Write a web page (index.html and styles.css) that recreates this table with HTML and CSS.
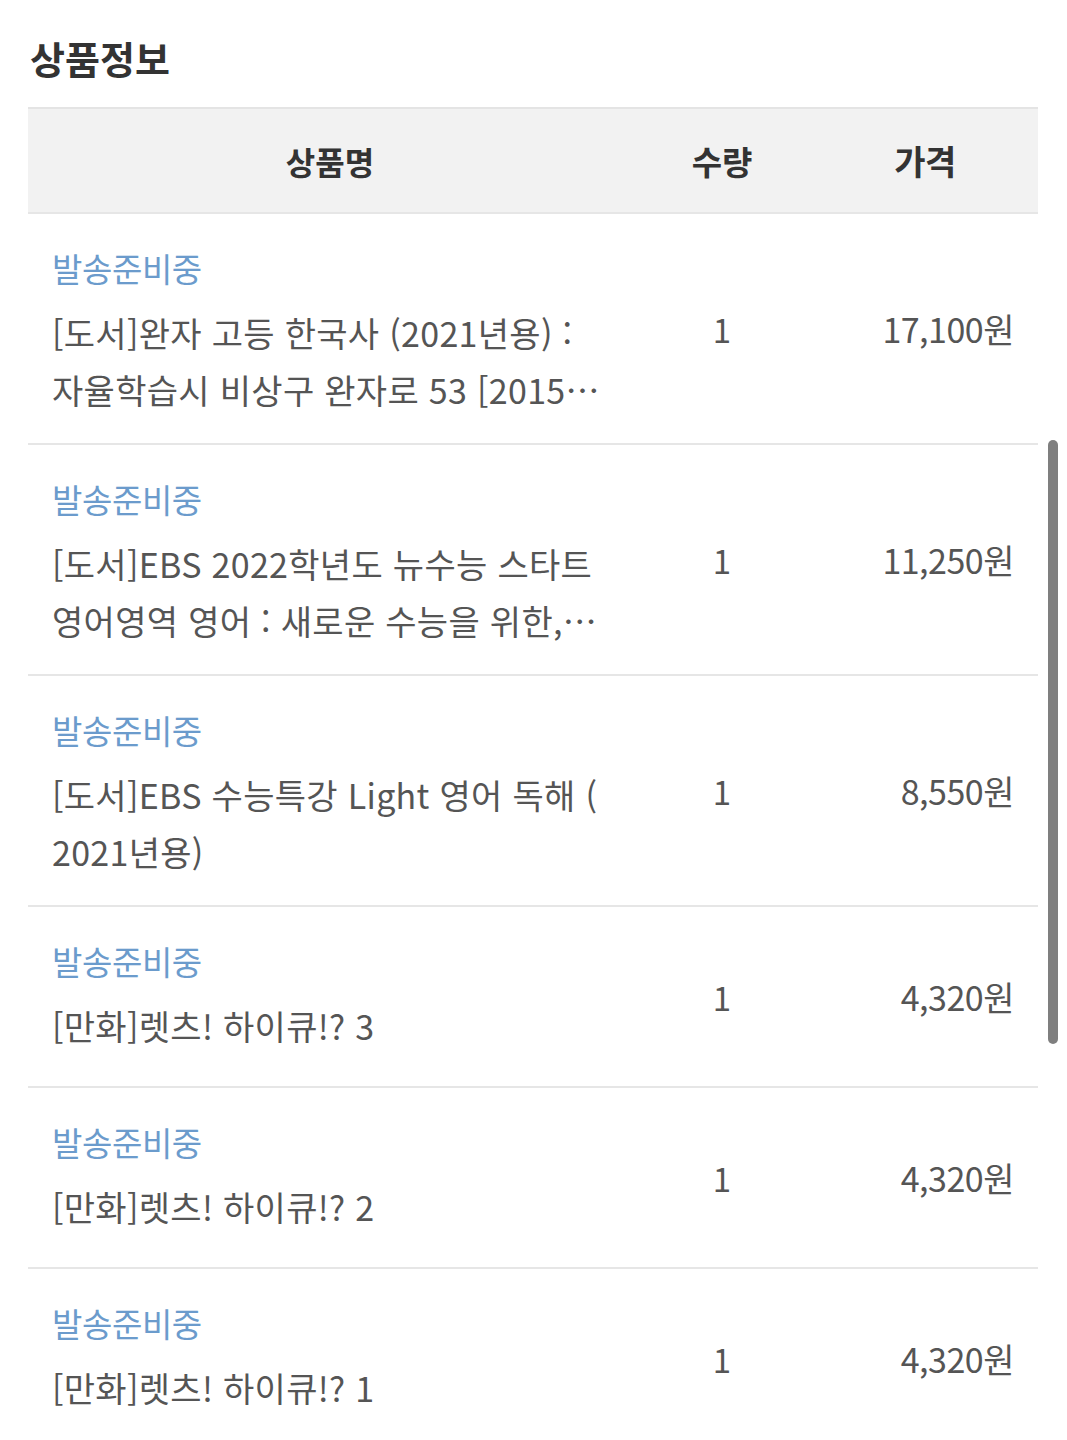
FILE: index.html
```html
<!DOCTYPE html>
<html lang="ko">
<head>
  <meta charset="UTF-8">
  <title>상품정보</title>
  <link rel="stylesheet" href="styles.css">
</head>
<body>

<div class="page">
  <h2 class="title">상품정보</h2>

  <div class="order-table">
    <div class="row head">
      <div class="cell name">상품명</div>
      <div class="cell qty">수량</div>
      <div class="cell price">가격</div>
    </div>

    <div class="row">
      <div class="cell name">
        <div class="status">발송준비중</div>
        <div class="product">[도서]완자 고등 한국사 (2021년용) : 자율학습시 비상구 완자로 53 [2015 개정 교육과정]</div>
      </div>
      <div class="cell qty">1</div>
      <div class="cell price">17,100원</div>
    </div>

    <div class="row">
      <div class="cell name">
        <div class="status">발송준비중</div>
        <div class="product">[도서]EBS 2022학년도 뉴수능 스타트 영어영역 영어 : 새로운 수능을 위한, 수능 대비 첫걸음</div>
      </div>
      <div class="cell qty">1</div>
      <div class="cell price">11,250원</div>
    </div>

    <div class="row">
      <div class="cell name">
        <div class="status">발송준비중</div>
        <div class="product">[도서]EBS 수능특강 Light 영어 독해 ( 2021년용)</div>
      </div>
      <div class="cell qty">1</div>
      <div class="cell price">8,550원</div>
    </div>

    <div class="row">
      <div class="cell name">
        <div class="status">발송준비중</div>
        <div class="product">[만화]렛츠! 하이큐!? 3</div>
      </div>
      <div class="cell qty">1</div>
      <div class="cell price">4,320원</div>
    </div>

    <div class="row">
      <div class="cell name">
        <div class="status">발송준비중</div>
        <div class="product">[만화]렛츠! 하이큐!? 2</div>
      </div>
      <div class="cell qty">1</div>
      <div class="cell price">4,320원</div>
    </div>

    <div class="row">
      <div class="cell name">
        <div class="status">발송준비중</div>
        <div class="product">[만화]렛츠! 하이큐!? 1</div>
      </div>
      <div class="cell qty">1</div>
      <div class="cell price">4,320원</div>
    </div>
  </div>

  <!-- 스크롤 표시 -->
  <div class="scroll-thumb"></div>
</div>

</body>
</html>
```

FILE: styles.css
```css
body {
  margin: 0;
  background-color: #ffffff;
  font-family: "Noto Sans CJK KR", "Noto Sans", sans-serif;
  color: #555555;
}

.page {
  position: relative;
  padding: 35px 29px 0 28px;
  height: 1405px;
  overflow: hidden;
}

.title {
  margin: 0 0 26px 2px;
  font-size: 38px;
  line-height: 46px;
  font-weight: 700;
  color: #333333;
  letter-spacing: 0;
}

.order-table {
  border-top: 2px solid #e4e4e4;
}

.row {
  display: grid;
  grid-template-columns: 604px 180px 1fr;
  align-items: center;
  border-bottom: 2px solid #e6e6e6;
}

.row.head {
  background-color: #f2f2f2;
  height: 103px;
  font-size: 32px;
  font-weight: 700;
  color: #333333;
  letter-spacing: 0;
}

.row.head .cell {
  text-align: center;
  padding: 0;
}

.cell.name {
  padding: 24px 0 25px 24px;
}

.status {
  font-size: 33px;
  line-height: 60px;
  color: #6b9bcc;
  letter-spacing: -0.4px;
  margin-bottom: 6px;
}

.product {
  font-size: 34px;
  line-height: 57px;
  min-height: 64px;
  letter-spacing: 0.3px;
  padding-right: 14px;
  word-break: keep-all;
  display: -webkit-box;
  -webkit-line-clamp: 2;
  -webkit-box-orient: vertical;
  overflow: hidden;
}

.cell.qty {
  text-align: center;
  font-size: 33px;
}

.cell.price {
  text-align: right;
  padding-right: 24px;
  font-size: 34px;
  letter-spacing: -0.5px;
}

.scroll-thumb {
  position: absolute;
  left: 1048px;
  top: 440px;
  width: 10px;
  height: 604px;
  border-radius: 5px;
  background-color: #7f7f7f;
}
```
